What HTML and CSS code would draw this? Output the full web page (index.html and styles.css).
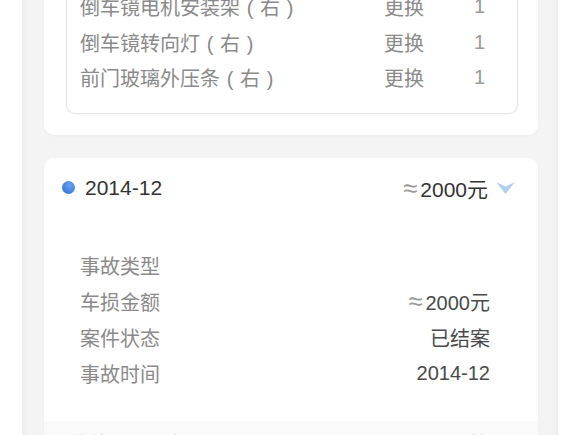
FILE: index.html
```html
<!DOCTYPE html>
<html lang="zh-CN">
<head>
  <meta charset="UTF-8">
  <meta name="viewport" content="width=device-width, initial-scale=1.0">
  <title>出险记录</title>
  <link rel="stylesheet" href="styles.css">
</head>
<body>
  <div class="panel">

    <!-- Repair parts card -->
    <div class="card parts-card">
      <div class="parts">
        <div class="part-row">
          <span class="part-name">倒车镜电机安装架<span class="paren">(</span>右<span class="paren">)</span></span>
          <span class="part-op">更换</span>
          <span class="part-qty">1</span>
        </div>
        <div class="part-row">
          <span class="part-name">倒车镜转向灯<span class="paren">(</span>右<span class="paren">)</span></span>
          <span class="part-op">更换</span>
          <span class="part-qty">1</span>
        </div>
        <div class="part-row">
          <span class="part-name">前门玻璃外压条<span class="paren">(</span>右<span class="paren">)</span></span>
          <span class="part-op">更换</span>
          <span class="part-qty">1</span>
        </div>
      </div>
    </div>

    <!-- Claim record card -->
    <div class="card record-card">
      <div class="record-head">
        <span class="dot"></span>
        <span class="record-date">2014-12</span>
        <span class="record-amount"><span class="approx">≈</span>2000元</span>
        <svg class="chevron" width="19" height="12" viewBox="0 0 19 12">
          <path d="M0 0 L9.5 4.5 L19 0 L9.5 12 Z" fill="#b5d0ee"/>
        </svg>
      </div>

      <div class="record-body">
        <div class="info-row">
          <span class="info-label">事故类型</span>
          <span class="info-value"></span>
        </div>
        <div class="info-row">
          <span class="info-label">车损金额</span>
          <span class="info-value"><span class="approx">≈</span>2000元</span>
        </div>
        <div class="info-row">
          <span class="info-label">案件状态</span>
          <span class="info-value">已结案</span>
        </div>
        <div class="info-row">
          <span class="info-label">事故时间</span>
          <span class="info-value">2014-12</span>
        </div>
      </div>

      <div class="record-foot">
        <span>维修项目明细</span>
        <span>数量</span>
      </div>
    </div>

    <!-- faint watermark -->
    <span class="mark mark-a">车图</span>
    <span class="mark mark-b">车图</span>
  </div>
</body>
</html>
```

FILE: styles.css
```css
/* General Styles */
body {
  margin: 0;
  background: #fff;
  font-family: "Liberation Sans", "Noto Sans CJK SC", sans-serif;
  overflow: hidden;
}

.panel {
  position: relative;
  margin: -11px 22px 0;
  padding: 0 20px 40px 22px;
  background: #f4f4f4;
  box-shadow: inset 8px 0 10px -8px rgba(0, 0, 0, 0.06), inset -8px 0 10px -8px rgba(0, 0, 0, 0.06);
}

.card {
  background: #fff;
  border-radius: 10px;
  box-shadow: 0 1px 3px rgba(0, 0, 0, 0.04);
}

/* Parts list */
.parts-card {
  padding: 0 20px 21px 22px;
  border-top-left-radius: 0;
  border-top-right-radius: 0;
}

.parts {
  border: 1px solid #e4e4e4;
  border-top: none;
  border-radius: 0 0 9px 9px;
  padding: 0 0 17px 13px;
  box-shadow: 0 1px 2px rgba(0, 0, 0, 0.04);
}

.part-row {
  display: grid;
  grid-template-columns: 304px 90px auto;
  height: 35.5px;
  align-items: center;
  font-size: 20px;
  color: #8a8a8a;
}

/* full-width brackets, glyph centred in its cell */
.paren {
  display: inline-block;
  width: 20px;
  text-align: center;
}

.part-qty {
  color: #999;
}

/* Record card */
.record-card {
  margin-top: 23px;
  overflow: hidden;
}

.record-head {
  display: flex;
  align-items: center;
  height: 60px;
  padding: 0 23px 0 18px;
  font-size: 21px;
  color: #333;
}

.dot {
  width: 13px;
  height: 13px;
  border-radius: 50%;
  background: radial-gradient(circle at 60% 35%, #6aa2ee, #2c6bd0);
  margin-right: 10px;
}

.record-date {
  flex: 1;
}

.approx {
  font-size: 26px;
  line-height: 1;
  color: #999;
  margin-right: 3px;
}

.chevron {
  margin-left: 8px;
}

.record-body {
  padding: 30px 48px 29px 36px;
}

.info-row {
  display: flex;
  justify-content: space-between;
  align-items: center;
  height: 36px;
  font-size: 20px;
}

.info-label {
  color: #8a8a8a;
}

.info-value {
  color: #4a4a4a;
}

.record-foot {
  display: flex;
  justify-content: space-between;
  padding: 8px 30px 14px 26px;
  background: #fafafa;
  font-size: 20px;
  color: #bbb;
}

/* Watermark */
.mark {
  position: absolute;
  font-size: 34px;
  color: rgba(0, 0, 0, 0.025);
  transform: rotate(-25deg);
  pointer-events: none;
}

.mark-a {
  left: 232px;
  top: 126px;
}

.mark-b {
  left: 520px;
  top: 290px;
}
```
